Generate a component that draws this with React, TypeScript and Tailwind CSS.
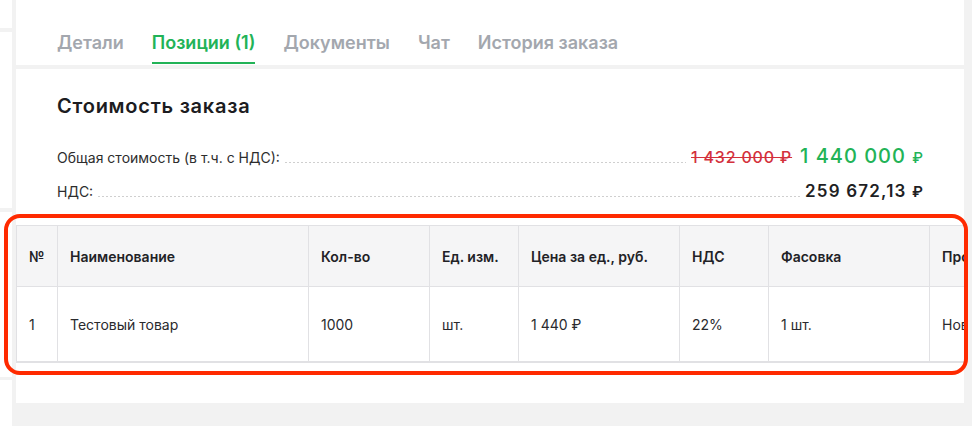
import React from "react";

const cols = [41, 251, 121, 89, 161, 89, 161, 200];
const headers = ["№", "Наименование", "Кол-во", "Ед. изм.", "Цена за ед., руб.", "НДС", "Фасовка", "Производитель"];
const row = ["1", "Тестовый товар", "1000", "шт.", "1 440 ₽", "22%", "1 шт.", "Новый"];

function Leader() {
  return (
    <div className="flex-1 mx-[5px] h-[1px] bg-[linear-gradient(to_right,#cfcfcf_50%,transparent_50%)] bg-[length:4px_1px] bg-repeat-x" />
  );
}

export default function App() {
  return (
    <div
      className="relative w-[972px] h-[426px] bg-[#f2f2f2] flex overflow-hidden"
      style={{ fontFamily: "Inter, 'Noto Sans', sans-serif" }}
    >
      {/* left strip */}
      <div className="w-[12px] flex flex-col">
        <div className="h-[28px] bg-white" />
        <div className="h-[176px] mt-[4px] bg-white" />
        <div className="h-[165px] mt-[4px] bg-white" />
        <div className="flex-1 mt-[3px] bg-white" />
      </div>

      {/* main column */}
      <div className="ml-[4px] w-[948px] flex flex-col">
        {/* tabs */}
        <div className="h-[65px] bg-white flex items-end pl-[41px] pb-[1px] gap-[28px] text-[18px] leading-[24px] font-semibold">
          <div className="pb-[7px] border-b-2 border-transparent text-[#a3a7ae]">Детали</div>
          <div className="pb-[7px] border-b-2 border-[#22b357] text-[#22b357]">Позиции (1)</div>
          <div className="pb-[7px] border-b-2 border-transparent text-[#a3a7ae]">Документы</div>
          <div className="pb-[7px] border-b-2 border-transparent text-[#a3a7ae]">Чат</div>
          <div className="pb-[7px] border-b-2 border-transparent text-[#a3a7ae]">История заказа</div>
        </div>

        {/* content panel */}
        <div className="mt-[4px] h-[334px] bg-white flex flex-col overflow-hidden">
          <div className="pl-[41px] pt-[23px] text-[20px] leading-[28px] font-semibold text-[#1c1c21] tracking-[0.75px]">
            Стоимость заказа
          </div>

          <div className="pl-[41px] pr-[41px] mt-[22px] flex items-baseline h-[28px]">
            <span className="text-[14px] text-[#2d2d2d]">Общая стоимость (в т.ч. с НДС):</span>
            <Leader />
            <span className="text-[16px] text-[#d3303c] line-through font-medium whitespace-nowrap tracking-[0.8px]">1 432 000 ₽</span>
            <span className="ml-[8px] text-[20px] leading-[28px] text-[#22b357] font-medium whitespace-nowrap tracking-[1px]">
              1 440 000 <span className="text-[15px] tracking-normal">₽</span>
            </span>
          </div>

          <div className="pl-[41px] pr-[41px] mt-[9px] flex items-baseline h-[24px]">
            <span className="text-[14px] text-[#2d2d2d]">НДС:</span>
            <Leader />
            <span className="text-[17px] leading-[24px] font-semibold text-[#1f1f24] whitespace-nowrap tracking-[1.2px]">
              259 672,13 <span className="text-[15px] tracking-normal">₽</span>
            </span>
          </div>

          {/* table */}
          <div className="mt-[22px] overflow-hidden">
            <div className="w-max border-l border-t border-[#e1e1e4] text-[14px]">
              <div className="flex bg-[#f5f5f6]">
                {headers.map((h, i) => (
                  <div
                    key={i}
                    style={{ width: cols[i] }}
                    className="h-[61px] px-3 flex items-center border-r border-b border-[#e1e1e4] font-semibold text-[#222226] whitespace-nowrap"
                  >
                    {h}
                  </div>
                ))}
              </div>
              <div className="flex bg-white">
                {row.map((c, i) => (
                  <div
                    key={i}
                    style={{ width: cols[i] }}
                    className="h-[76px] px-3 flex items-center border-r border-b-2 border-[#e1e1e4] text-[#2a2a2e] whitespace-nowrap"
                  >
                    {c}
                  </div>
                ))}
              </div>
            </div>
          </div>
        </div>
      </div>

      {/* annotation outline */}
      <div className="absolute left-[4px] top-[214px] w-[964px] h-[161px] border-[4px] border-[#ff2a00] rounded-[16px] pointer-events-none" />
    </div>
  );
}
